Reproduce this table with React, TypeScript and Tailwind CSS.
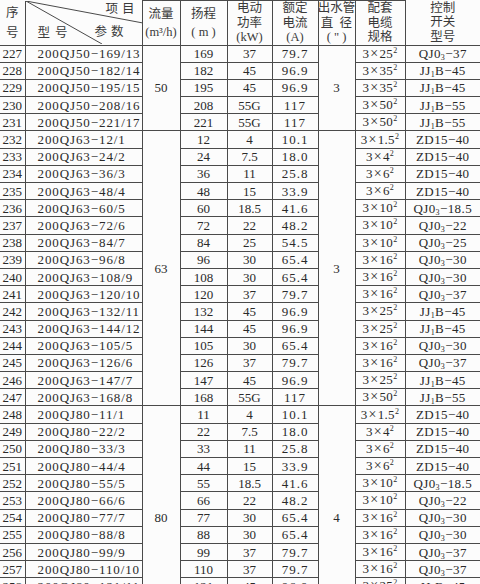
import React from 'react'

type Sw = ['Q' | 'J' | 'Z', string]
type Row = [number, string, number, string, string, string, Sw]

const rows: Row[] = [
  [227, '50−169/13', 169, '37', '79.7', '25', ['Q', '37']],
  [228, '50−182/14', 182, '45', '96.9', '35', ['J', '45']],
  [229, '50−195/15', 195, '45', '96.9', '35', ['J', '45']],
  [230, '50−208/16', 208, '55G', '117', '50', ['J', '55']],
  [231, '50−221/17', 221, '55G', '117', '50', ['J', '55']],
  [232, '63−12/1', 12, '4', '10.1', '1.5', ['Z', '40']],
  [233, '63−24/2', 24, '7.5', '18.0', '4', ['Z', '40']],
  [234, '63−36/3', 36, '11', '25.8', '6', ['Z', '40']],
  [235, '63−48/4', 48, '15', '33.9', '6', ['Z', '40']],
  [236, '63−60/5', 60, '18.5', '41.6', '10', ['Q', '18.5']],
  [237, '63−72/6', 72, '22', '48.2', '10', ['Q', '22']],
  [238, '63−84/7', 84, '25', '54.5', '10', ['Q', '25']],
  [239, '63−96/8', 96, '30', '65.4', '16', ['Q', '30']],
  [240, '63−108/9', 108, '30', '65.4', '16', ['Q', '30']],
  [241, '63−120/10', 120, '37', '79.7', '16', ['Q', '37']],
  [242, '63−132/11', 132, '45', '96.9', '25', ['J', '45']],
  [243, '63−144/12', 144, '45', '96.9', '25', ['J', '45']],
  [244, '63−105/5', 105, '30', '65.4', '16', ['Q', '30']],
  [245, '63−126/6', 126, '37', '79.7', '16', ['Q', '37']],
  [246, '63−147/7', 147, '45', '96.9', '25', ['J', '45']],
  [247, '63−168/8', 168, '55G', '117', '50', ['J', '55']],
  [248, '80−11/1', 11, '4', '10.1', '1.5', ['Z', '40']],
  [249, '80−22/2', 22, '7.5', '18.0', '4', ['Z', '40']],
  [250, '80−33/3', 33, '11', '25.8', '6', ['Z', '40']],
  [251, '80−44/4', 44, '15', '33.9', '6', ['Z', '40']],
  [252, '80−55/5', 55, '18.5', '41.6', '10', ['Q', '18.5']],
  [253, '80−66/6', 66, '22', '48.2', '10', ['Q', '22']],
  [254, '80−77/7', 77, '30', '65.4', '16', ['Q', '30']],
  [255, '80−88/8', 88, '30', '65.4', '16', ['Q', '30']],
  [256, '80−99/9', 99, '37', '79.7', '16', ['Q', '37']],
  [257, '80−110/10', 110, '37', '79.7', '16', ['Q', '37']],
  [258, '80−121/11', 121, '45', '96.9', '25', ['J', '45']],
  [259, '80−132/12', 132, '45', '96.9', '25', ['J', '45']],
  [260, '80−143/13', 143, '55G', '117', '50', ['J', '55']],
]

// merged cells for 流量 and 出水管直径, keyed by first row number
const groups: Record<number, { span: number; flow: string; pipe: string }> = {
  227: { span: 5, flow: '50', pipe: '3' },
  232: { span: 16, flow: '63', pipe: '3' },
  248: { span: 13, flow: '80', pipe: '4' },
}

const serif = "font-['Liberation_Serif','Noto_Sans_CJK_SC',serif]"
const td = 'border border-[#4a4a4a] p-0 text-center align-middle'

function Switch({ sw }: { sw: Sw }) {
  const [kind, val] = sw
  if (kind === 'Z') return <>ZD15−{val}</>
  if (kind === 'Q')
    return (
      <>
        QJ0<span className="relative top-[2px] text-[8px]">3</span>−{val}
      </>
    )
  return (
    <>
      JJ<span className="relative top-[2px] text-[8px]">1</span>B−{val}
    </>
  )
}

function HeadCell({ lines, tight }: { lines: string[]; tight?: boolean }) {
  return (
    <th className={`${td} font-normal`}>
      <div className={`flex flex-col items-center ${tight ? 'leading-[14.5px]' : 'gap-[4px] leading-[14px]'}`}>
        {lines.map((l, i) => (
          <span key={i} className="whitespace-pre">{l}</span>
        ))}
      </div>
    </th>
  )
}

export default function App() {
  return (
    <div className={`w-[480px] h-[584px] overflow-hidden bg-[#fcfcfc] text-[#2a2a2a] ${serif}`}>
      <table className="w-[480px] table-fixed border-collapse text-[13px] leading-none">
        <colgroup>
          <col className="w-[25px]" />
          <col className="w-[117px]" />
          <col className="w-[38px]" />
          <col className="w-[47px]" />
          <col className="w-[45px]" />
          <col className="w-[46px]" />
          <col className="w-[37px]" />
          <col className="w-[50px]" />
          <col className="w-[75px]" />
        </colgroup>
        <thead className="text-[12.5px] text-[#3a3a3a]">
          <tr className="h-[43px]">
            <th className={`${td} border-l-0 border-t-0 font-normal`}>
              <div className="flex flex-col items-center gap-[6px] leading-[14px]">
                <span>序</span>
                <span>号</span>
              </div>
            </th>
            <th className={`${td} border-t-0 font-normal relative`}>
              <svg className="absolute inset-0" width="117" height="43" viewBox="0 0 117 43">
                <line x1="0" y1="0" x2="117" y2="22" stroke="#4a4a4a" strokeWidth="1" />
                <line x1="0" y1="0" x2="76" y2="43" stroke="#4a4a4a" strokeWidth="1" />
              </svg>
              <span className="absolute right-[3px] top-[2px] tracking-[4px]">项目</span>
              <span className="absolute right-[14px] top-[25px] tracking-[4px]">参数</span>
              <span className="absolute left-[12px] top-[26px] tracking-[5px]">型号</span>
            </th>
            <HeadCell lines={['流量', '(m³/h)']} />
            <HeadCell lines={['扬程', '( m )']} />
            <HeadCell tight lines={['电动', '功率', '(kW)']} />
            <HeadCell tight lines={['额定', '电流', '(A)']} />
            <HeadCell tight lines={['出水管', '直  径', '( " )']} />
            <HeadCell tight lines={['配套', '电缆', '规格']} />
            <th className={`${td} border-r-0 border-t-0 font-normal`}>
              <div className="flex flex-col items-center leading-[14.5px]">
                <span>控制</span>
                <span>开关</span>
                <span>型号</span>
              </div>
            </th>
          </tr>
        </thead>
        <tbody>
          {rows.map(([n, model, lift, kw, amp, cable, sw]) => {
            const g = groups[n]
            return (
              <tr key={n} className="h-[17.2px]">
                <td className={`${td} border-l-0`}>{n}</td>
                <td className={`${td} text-left pl-[12px] tracking-[0.9px] whitespace-nowrap`}>200QJ{model}</td>
                {g && (
                  <td rowSpan={g.span} className={td}>
                    {g.flow}
                  </td>
                )}
                <td className={td}>{lift}</td>
                <td className={td}>{kw}</td>
                <td className={`${td} tracking-[1px]`}>{amp}</td>
                {g && (
                  <td rowSpan={g.span} className={td}>
                    {g.pipe}
                  </td>
                )}
                <td className={`${td} whitespace-nowrap tracking-[0.3px]`}>
                  3<span className="mx-[1px] text-[14px]">×</span>
                  {cable}
                  <span className="relative -top-[5px] text-[8px]">2</span>
                </td>
                <td className={`${td} border-r-0 whitespace-nowrap tracking-[0.4px]`}>
                  <Switch sw={sw} />
                </td>
              </tr>
            )
          })}
        </tbody>
      </table>
    </div>
  )
}
